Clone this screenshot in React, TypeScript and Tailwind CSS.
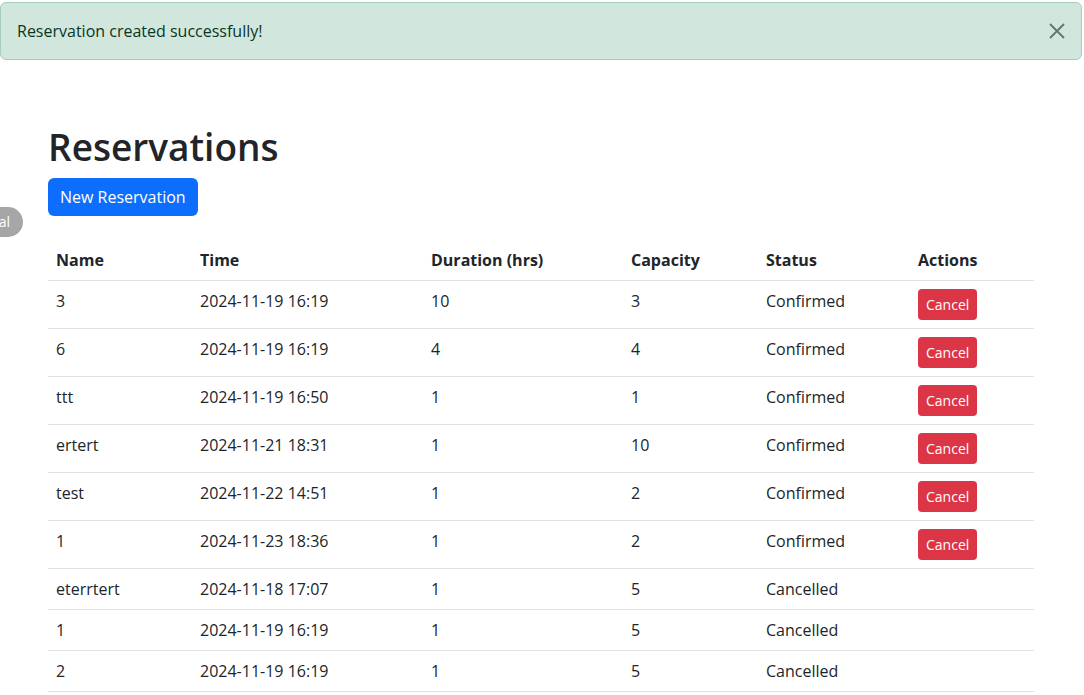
const rows = [
  { name: "3", time: "2024-11-19 16:19", duration: "10", capacity: "3", status: "Confirmed" },
  { name: "6", time: "2024-11-19 16:19", duration: "4", capacity: "4", status: "Confirmed" },
  { name: "ttt", time: "2024-11-19 16:50", duration: "1", capacity: "1", status: "Confirmed" },
  { name: "ertert", time: "2024-11-21 18:31", duration: "1", capacity: "10", status: "Confirmed" },
  { name: "test", time: "2024-11-22 14:51", duration: "1", capacity: "2", status: "Confirmed" },
  { name: "1", time: "2024-11-23 18:36", duration: "1", capacity: "2", status: "Confirmed" },
  { name: "eterrtert", time: "2024-11-18 17:07", duration: "1", capacity: "5", status: "Cancelled" },
  { name: "1", time: "2024-11-19 16:19", duration: "1", capacity: "5", status: "Cancelled" },
  { name: "2", time: "2024-11-19 16:19", duration: "1", capacity: "5", status: "Cancelled" },
];

const cols = ["w-[144px]", "w-[231px]", "w-[200px]", "w-[135px]", "w-[152px]", "w-[124px]"];

export default function App() {
  return (
    <div className="relative w-[1082px] min-h-[695px] bg-white text-[#212529] font-['Open_Sans',sans-serif] text-[16px] leading-6">
      <div className="relative mt-[2px] flex items-center h-[58px] pl-4 pr-12 bg-[#d1e7dd] border border-[#a3cfbb] rounded-md text-[#0a3622]">
        <span>Reservation created successfully!</span>
        <button className="absolute right-4 top-[20px] w-4 h-4 opacity-50">
          <svg viewBox="0 0 16 16" className="w-4 h-4" fill="none" stroke="#000" strokeWidth="1.8">
            <path d="M1 1L15 15M15 1L1 15" />
          </svg>
        </button>
      </div>

      <div className="absolute left-[-42px] top-[205px] h-[30px] w-[65px] rounded-full bg-[#a6a6a6] text-white text-[14px] flex items-center justify-end pr-[13px]">
        al
      </div>

      <div className="px-12 pt-[64px]">
        <h1 className="text-[37px] leading-[46px] font-semibold mb-2">Reservations</h1>
        <button className="h-[38px] px-3 rounded-md bg-[#0d6efd] text-white">New Reservation</button>

        <table className="mt-6 w-[986px] border-collapse table-fixed">
          <thead>
            <tr className="border-b border-[#dee2e6]">
              {["Name", "Time", "Duration (hrs)", "Capacity", "Status", "Actions"].map((h, i) => (
                <th key={h} className={`${cols[i]} p-2 text-left font-bold`}>
                  {h}
                </th>
              ))}
            </tr>
          </thead>
          <tbody>
            {rows.map((r, i) => (
              <tr key={i} className="border-b border-[#dee2e6] align-top">
                <td className="p-2">{r.name}</td>
                <td className="p-2">{r.time}</td>
                <td className="p-2">{r.duration}</td>
                <td className="p-2">{r.capacity}</td>
                <td className="p-2">{r.status}</td>
                <td className="p-2">
                  {r.status === "Confirmed" && (
                    <button className="h-[31px] px-2 rounded bg-[#dc3545] text-white text-[14px] leading-[21px]">
                      Cancel
                    </button>
                  )}
                </td>
              </tr>
            ))}
          </tbody>
        </table>
      </div>
    </div>
  );
}
